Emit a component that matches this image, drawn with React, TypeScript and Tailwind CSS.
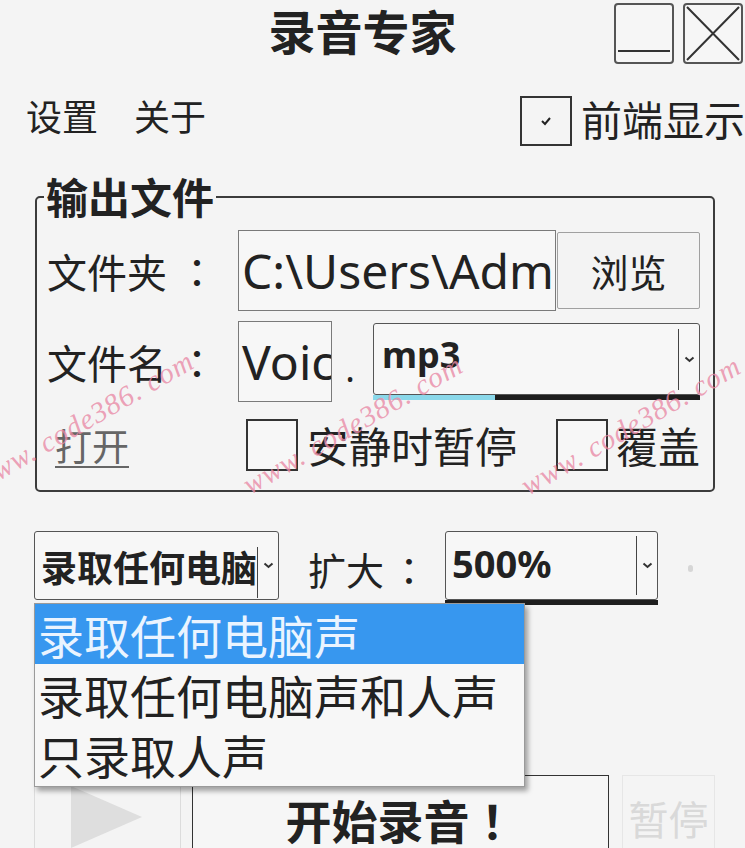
import React from "react";

const cjk = "font-['Noto_Sans_CJK_SC',sans-serif]";
const colon = "font-['Noto_Sans_CJK_JP',sans-serif]";

function Chevron() {
  return (
    <svg width="11" height="7" viewBox="0 0 11 7" className="shrink-0">
      <path d="M1.5 1.5 L5.5 5 L9.5 1.5" fill="none" stroke="#333" strokeWidth="2" />
    </svg>
  );
}

function Combo({
  text,
  className,
  textClass,
  sepClass,
}: {
  text: string;
  className: string;
  textClass: string;
  sepClass: string;
}) {
  return (
    <div className={`flex rounded-[3px] border-[1.5px] border-[#555] bg-[#f7f7f7] ${className}`}>
      <div className={`flex flex-1 items-center overflow-hidden whitespace-nowrap font-bold text-[#222] ${textClass}`}>
        {text}
      </div>
      <div className={`w-[1.5px] bg-[#444] ${sepClass}`} />
      <div className="flex w-[20px] items-center justify-center">
        <Chevron />
      </div>
    </div>
  );
}

function Box({ checked }: { checked?: boolean }) {
  return (
    <div className="flex h-[52px] w-[52px] shrink-0 items-center justify-center border-2 border-[#333] bg-[#f7f7f7]">
      {checked && (
        <svg width="12" height="10" viewBox="0 0 12 10">
          <path d="M1.5 5 L4.5 8 L10.5 1.5" fill="none" stroke="#222" strokeWidth="2" />
        </svg>
      )}
    </div>
  );
}

function Watermark({ x, y }: { x: number; y: number }) {
  return (
    <div
      className="pointer-events-none absolute z-20 -translate-x-1/2 -translate-y-1/2 rotate-[-30deg] whitespace-nowrap font-['Liberation_Serif',serif] text-[29px] italic tracking-[1px] text-[#e98aa6]/80"
      style={{ left: x, top: y }}
    >
      www. code386. com
    </div>
  );
}

export default function App() {
  return (
    <div className={`relative h-[848px] w-[745px] overflow-hidden bg-[#f4f4f4] text-[#222] ${cjk}`}>
      {/* title bar */}
      <div className="grid h-[67px] grid-cols-[1fr_auto_1fr] items-center">
        <div />
        <div className="-mt-[8px] mr-[20px] text-[47px] font-bold leading-none">录音专家</div>
        <div className="flex justify-end gap-[9px] pr-[2px]">
          <div className="flex h-[61px] w-[60px] items-end justify-center rounded-[4px] border-2 border-[#555] bg-[#f6f6f6] pb-[10px]">
            <div className="h-[2.5px] w-[52px] bg-[#333]" />
          </div>
          <div className="h-[61px] w-[60px] rounded-[4px] border-2 border-[#555] bg-[#f6f6f6]">
            <svg width="56" height="57" viewBox="0 0 56 57">
              <path d="M2 2 L54 55 M54 2 L2 55" stroke="#333" strokeWidth="2" />
            </svg>
          </div>
        </div>
      </div>

      {/* menu row */}
      <div className="mt-[29px] flex h-[50px] items-start">
        <div className="ml-[26px] mt-[1px] flex gap-[36px] text-[36px] leading-none">
          <span>设置</span>
          <span>关于</span>
        </div>
        <div className="ml-auto flex items-start">
          <div className="flex h-[50px] w-[52px] items-center justify-center border-2 border-[#333]">
            <svg width="12" height="10" viewBox="0 0 12 10">
              <path d="M2 5 L5 8 L10 2" fill="none" stroke="#222" strokeWidth="2" />
            </svg>
          </div>
          <span className="ml-[9px] mt-[2px] whitespace-nowrap text-[41px] leading-none">前端显示</span>
        </div>
      </div>

      {/* output file group */}
      <div className="relative ml-[35px] mt-[50px] h-[296px] w-[680px] rounded-[5px] border-2 border-[#3c3c3c]">
        <div className="absolute left-[7px] top-[-23px] bg-[#f4f4f4] px-[2px] text-[42px] font-bold leading-none">
          输出文件
        </div>

        <div className="mt-[32px] flex h-[81px] items-center pl-[10px]">
          <span className="w-[191px] text-[40px] leading-none">
            文件夹<span className={`ml-[10px] ${colon}`}>：</span>
          </span>
          <div className="flex h-[81px] w-[318px] items-center overflow-hidden whitespace-nowrap border-[1.5px] border-[#7a7a7a] bg-[#f7f7f7] pl-[3px] font-['Noto_Sans',sans-serif] text-[48px]">
            C:\Users\Administrator
          </div>
          <div className="ml-[1px] flex h-[77px] w-[143px] items-center justify-center rounded-[2px] border-[1.5px] border-[#a0a0a0] bg-[#f3f3f3] text-[38px] leading-none">
            浏览
          </div>
        </div>

        <div className="mt-[10px] flex h-[81px] items-center pl-[10px]">
          <span className="w-[191px] text-[40px] leading-none">
            文件名<span className={`ml-[10px] ${colon}`}>：</span>
          </span>
          <div className="flex h-[81px] w-[94px] items-center overflow-hidden whitespace-nowrap border-[1.5px] border-[#7a7a7a] bg-[#f7f7f7] pl-[3px] font-['Noto_Sans',sans-serif] text-[48px]">
            Voice
          </div>
          <span className="w-[36px] pt-[14px] text-center font-['Noto_Sans',sans-serif] text-[36px] leading-none">.</span>
          <div className="ml-[5px] flex flex-col">
            <Combo
              text="mp3"
              className="h-[72px] w-[327px]"
              textClass="pl-[8px] pb-[8px] font-['Noto_Sans',sans-serif] text-[36px]"
              sepClass="mb-[4px] mt-[5px]"
            />
            <div className="flex h-[5px] w-[327px]">
              <div className="w-[122px] bg-[#8ad8ea]" />
              <div className="flex-1 bg-[#1e1e1e]" />
            </div>
          </div>
        </div>

        <div className="mt-[17px] flex h-[52px] items-center pl-[18px]">
          <span className="w-[191px] text-[37px] leading-none text-[#666] underline decoration-[2px] underline-offset-[5px]">
            打开
          </span>
          <Box />
          <span className="ml-[9px] text-[42px] leading-none">安静时暂停</span>
          <div className="ml-[39px]">
            <Box />
          </div>
          <span className="ml-[8px] text-[42px] leading-none">覆盖</span>
        </div>
      </div>

      {/* source + gain row */}
      <div className="mt-[39px] flex items-start">
        <Combo
          text="录取任何电脑声"
          className="ml-[34px] h-[69px] w-[245px]"
          textClass={`pl-[6px] text-[36px] ${cjk}`}
          sepClass="mb-[1px] mt-[15px]"
        />
        <span className="ml-[29px] mt-[19px] text-[38px] leading-none">
          扩大<span className={`ml-[6px] ${colon}`}>：</span>
        </span>
        <div className="ml-[17px] flex flex-col">
          <Combo
            text="500%"
            className="h-[69px] w-[213px]"
            textClass="pl-[6px] pb-[4px] font-['Noto_Sans',sans-serif] text-[38px]"
            sepClass="mb-[4px] mt-[4px]"
          />
          <div className="h-[5px] w-[213px] bg-[#1e1e1e]" />
        </div>
        <div className="ml-[30px] mt-[34px] h-[7px] w-[5px] rounded-full bg-[#d6d6d6]" />
      </div>

      {/* bottom buttons */}
      <div className="mt-[170px] flex">
        <div className="ml-[34px] flex h-[100px] w-[147px] items-start border border-[#dcdcdc] pl-[36px] pt-[10px]">
          <svg width="72" height="62" viewBox="0 0 72 62">
            <path d="M0 0 L71 31 L0 62 Z" fill="#dedede" />
          </svg>
        </div>
        <div className="ml-[11px] flex h-[100px] w-[417px] items-start justify-center border-[1.5px] border-[#333] bg-[#f6f6f6] pt-[20px] text-[46px] font-bold leading-none">
          开始录音<span className={colon}>！</span>
        </div>
        <div className="ml-[13px] flex h-[100px] w-[93px] items-start justify-center border border-[#e6e6e6] pt-[22px] text-[40px] leading-none text-[#d9d9d9]">
          暂停
        </div>
      </div>

      {/* open dropdown list */}
      <div className="absolute left-[34px] top-[603px] z-10 h-[184px] w-[491px] border border-[#9a9a9a] bg-[#f7f7f7] shadow-[3px_4px_5px_rgba(0,0,0,0.35)]">
        <div className="flex h-[60px] items-center bg-[#3797ef] pl-[3px] text-[46px] leading-none text-[#eaf4ff]">
          录取任何电脑声
        </div>
        <div className="flex h-[60px] items-center pl-[3px] text-[46px] leading-none">录取任何电脑声和人声</div>
        <div className="flex h-[60px] items-center pl-[3px] text-[46px] leading-none">只录取人声</div>
      </div>

      <Watermark x={84} y={421} />
      <Watermark x={353} y={425} />
      <Watermark x={631} y={426} />
    </div>
  );
}
